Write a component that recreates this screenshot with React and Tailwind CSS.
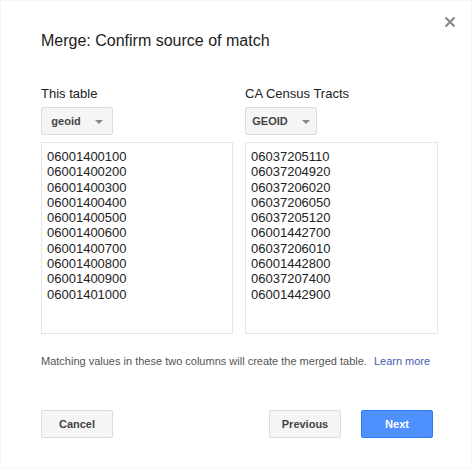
import React from 'react';

const leftValues = [
    '06001400100', '06001400200', '06001400300', '06001400400', '06001400500',
    '06001400600', '06001400700', '06001400800', '06001400900', '06001401000',
];

const rightValues = [
    '06037205110', '06037204920', '06037206020', '06037206050', '06037205120',
    '06001442700', '06037206010', '06001442800', '06037207400', '06001442900',
];

const Dropdown = ({ label }) => (
    <div className="flex items-center justify-center gap-[14px] w-[72px] h-[28px] bg-[#f5f5f5] border border-[#dcdcdc] rounded-[2px] text-[11px] font-bold text-[#444]">
        <span>{label}</span>
        <span className="w-0 h-0 border-x-[4px] border-x-transparent border-t-[4px] border-t-[#888] mt-[1px]" />
    </div>
);

const Column = ({ title, field, values, className }) => (
    <div className={`flex flex-col ${className}`}>
        <div className="text-[13px] leading-[16px] text-[#222] h-[16px]">{title}</div>
        <div className="mt-[5px]">
            <Dropdown label={field} />
        </div>
        <div className="mt-[7px] h-[192px] border border-[#e5e5e5] pl-[5px] pt-[6px] text-[13px] leading-[15.3px] text-[#222]">
            {values.map((v, i) => (
                <div key={i}>{v}</div>
            ))}
        </div>
    </div>
);

const App = () => {
    return (
        <div className="relative w-[472px] h-[468px] bg-white border border-[#f6f6f6] font-['Liberation_Sans',Arial,sans-serif]">
            <button className="absolute top-[14px] right-[14px] w-[13px] h-[13px] text-[#888]">
                <svg viewBox="0 0 12 12" width="12" height="12">
                    <path d="M1.5 1.5 L10.5 10.5 M10.5 1.5 L1.5 10.5" stroke="#8a8a8a" strokeWidth="2.2" />
                </svg>
            </button>

            <div className="pl-[40px] pt-[30px]">
                <h2 className="text-[16px] leading-[20px] text-[#222]">Merge: Confirm source of match</h2>

                <div className="flex mt-[35px]">
                    <Column title="This table" field="geoid" values={leftValues} className="w-[192px]" />
                    <Column title="CA Census Tracts" field="GEOID" values={rightValues} className="w-[193px] ml-[12px]" />
                </div>

                <p className="mt-[20px] text-[11px] leading-[14px] text-[#555]">
                    Matching values in these two columns will create the merged table.
                    <span className="ml-[7px] text-[#4a5bb0]">Learn more</span>
                </p>

                <div className="flex mt-[42px] w-[392px]">
                    <button className="w-[72px] h-[28px] bg-[#f5f5f5] border border-[#dcdcdc] rounded-[2px] text-[11px] font-bold text-[#444]">
                        Cancel
                    </button>
                    <div className="flex-1" />
                    <button className="w-[72px] h-[28px] bg-[#f5f5f5] border border-[#dcdcdc] rounded-[2px] text-[11px] font-bold text-[#444]">
                        Previous
                    </button>
                    <button className="ml-[20px] w-[72px] h-[28px] bg-[#4d90fe] border border-[#3079ed] rounded-[2px] text-[11px] font-bold text-white">
                        Next
                    </button>
                </div>
            </div>
        </div>
    );
};

export default App;
